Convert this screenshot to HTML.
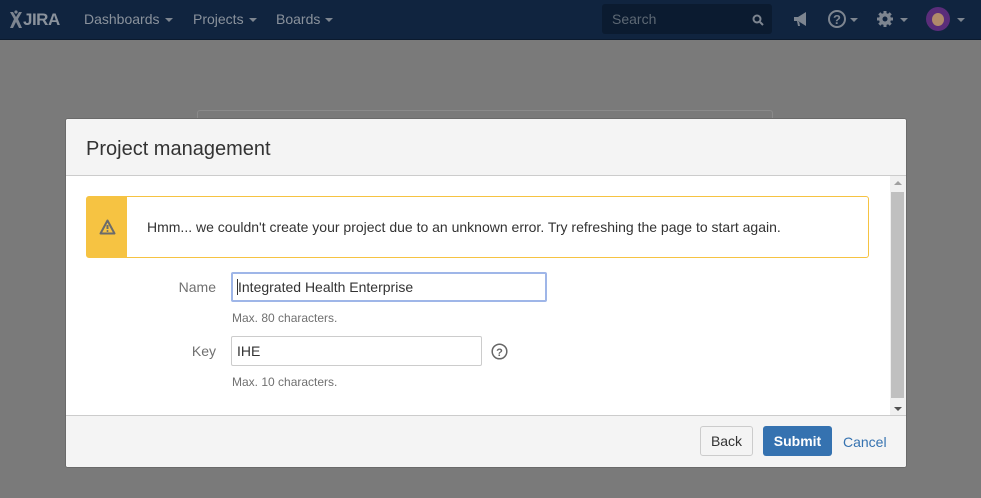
<!DOCTYPE html>
<html><head><style>
*{box-sizing:border-box;margin:0;padding:0}
body{width:981px;height:498px;background:#7a7a7a;font-family:"Liberation Sans",Arial,sans-serif;position:relative;overflow:hidden}
.nav{position:absolute;left:0;top:0;width:981px;height:40px;background:#10243f;border-bottom:1px solid #0b1a2e}
.nav .t{position:absolute;top:11px;color:#8a929c;font-size:14px}
.car{display:inline-block;border-left:4px solid transparent;border-right:4px solid transparent;border-top:4px solid #7d8590;vertical-align:middle;margin-left:5px}
.bg{position:absolute;left:197px;top:110px;width:576px;height:30px;border:1px solid #8a8a8a;border-radius:3px}
.dlg{position:absolute;left:65px;top:118px;width:842px;height:350px;background:#fff;border-radius:3px;overflow:hidden;border:1px solid #6a6a6a}
.hd{height:57px;background:#f4f4f4;border-bottom:1px solid #ccc;padding:19px 20px 0;font-size:20px;color:#333}
.ft{position:absolute;left:0;bottom:0;width:100%;height:52px;background:#f4f4f4;border-top:1px solid #ccc}
.msg{position:absolute;left:20px;top:77px;width:783px;height:62px;border:1px solid #f6c342;border-radius:3px}
.msg .ic{position:absolute;left:0;top:0;width:40px;height:60px;background:#f6c342}
.msg .tx{position:absolute;left:60px;top:22px;font-size:14px;color:#333}
.lbl{position:absolute;font-size:14px;color:#707070;text-align:right;width:60px}
.in{position:absolute;height:30px;border:1px solid #ccc;border-radius:2px;font-size:14px;color:#333;padding:6px 5px}
.desc{position:absolute;font-size:12px;color:#707070}
.sb{position:absolute;left:824px;top:57px;width:16px;height:240px;background:#f0f0f0}
.sb .th{position:absolute;left:1px;top:16px;width:13px;height:206px;background:#c0c0c0}
</style></head><body>
<div class="nav">
<svg style="position:absolute;left:8px;top:10px" width="56" height="20" viewBox="0 0 56 20"><path d="M2 2h3l3 5 3-5h3l-4 7 4 9h-3l-3-6-3 6H2l4-9z" fill="#7d8590"/><circle cx="8" cy="2" r="1.6" fill="#7d8590"/></svg>
<span class="t" style="left:23px;font-weight:bold;font-size:17px;top:10px;letter-spacing:-0.5px">JIRA</span>
<span class="t" style="left:84px">Dashboards<span class="car"></span></span>
<span class="t" style="left:193px">Projects<span class="car"></span></span>
<span class="t" style="left:276px">Boards<span class="car"></span></span>
<div style="position:absolute;left:602px;top:4px;width:170px;height:30px;background:#0b1b30;border-radius:3px"><span style="position:absolute;left:10px;top:7px;color:#5d6874;font-size:14px">Search</span><svg style="position:absolute;right:8px;top:10px" width="12" height="12"><circle cx="5" cy="5" r="3.5" stroke="#7d8590" stroke-width="2" fill="none"/><path d="M8 8l3 3" stroke="#7d8590" stroke-width="2"/></svg></div>
<svg style="position:absolute;left:792px;top:11px" width="18" height="16"><path d="M2 6h4l8-5v14l-8-5H2z M5 10l1 5h2l-1-5" fill="#7d8590"/></svg>
<svg style="position:absolute;left:827px;top:9px" width="20" height="20"><circle cx="10" cy="10" r="8" stroke="#7d8590" stroke-width="2" fill="none"/><text x="10" y="15" font-size="13" font-weight="bold" fill="#7d8590" text-anchor="middle" font-family="Liberation Sans">?</text></svg><span class="car" style="position:absolute;left:845px;top:18px"></span>
<svg style="position:absolute;left:876px;top:10px" width="18" height="18" viewBox="0 0 18 18"><circle cx="9" cy="9" r="6" fill="#7d8590"/><g stroke="#7d8590" stroke-width="3"><path d="M9 1v16M1 9h16M3.3 3.3l11.4 11.4M14.7 3.3L3.3 14.7"/></g><circle cx="9" cy="9" r="2.5" fill="#10243f"/></svg><span class="car" style="position:absolute;left:895px;top:18px"></span>
<div style="position:absolute;left:926px;top:7px;width:24px;height:24px;border-radius:50%;background:#5a2d7a"><div style="position:absolute;left:6px;top:6px;width:12px;height:13px;border-radius:50%;background:#b08a6a"></div></div><span class="car" style="position:absolute;left:952px;top:18px"></span>
</div>
<div class="bg"></div>
<div class="dlg">
<div class="hd">Project management</div>
<div class="msg"><div class="ic"><svg style="position:absolute;left:12px;top:22px" width="17" height="16" viewBox="0 0 17 16"><path d="M8.5 1.5L15.5 14.5H1.5Z" stroke="#6b6b6b" stroke-width="2" fill="none" stroke-linejoin="round"/><path d="M8.5 6v4" stroke="#6b6b6b" stroke-width="2"/><circle cx="8.5" cy="12" r="1" fill="#6b6b6b"/></svg></div><div class="tx">Hmm... we couldn't create your project due to an unknown error. Try refreshing the page to start again.</div></div>
<div class="lbl" style="left:90px;top:160px">Name</div>
<div class="in" style="left:165px;top:153px;width:316px;border:2px solid #9fb6e8;padding:5px 4px"><span style="border-left:1px solid #333">Integrated Health Enterprise</span></div>
<div class="desc" style="left:166px;top:192px">Max. 80 characters.</div>
<div class="lbl" style="left:90px;top:224px">Key</div>
<div class="in" style="left:165px;top:217px;width:251px">IHE</div>
<svg style="position:absolute;left:425px;top:224px" width="17" height="17"><circle cx="8.5" cy="8.5" r="7.3" stroke="#666" stroke-width="1.5" fill="none"/><text x="8.5" y="13" font-size="11" font-weight="bold" fill="#666" text-anchor="middle" font-family="Liberation Sans">?</text></svg>
<div class="desc" style="left:166px;top:256px">Max. 10 characters.</div>
<div class="sb"><div class="th"></div><span style="position:absolute;left:4px;top:5px;border-left:4px solid transparent;border-right:4px solid transparent;border-bottom:4px solid #a0a0a0"></span><span style="position:absolute;left:4px;bottom:5px;border-left:4px solid transparent;border-right:4px solid transparent;border-top:4px solid #505050"></span></div>
<div class="ft">
<div style="position:absolute;left:634px;top:10px;width:53px;height:30px;border:1px solid #ccc;border-radius:3px;background:#f4f4f4;font-size:14px;color:#333;text-align:center;line-height:29px">Back</div>
<div style="position:absolute;left:697px;top:10px;width:69px;height:30px;border-radius:3px;background:#3572b0;font-size:14px;color:#fff;font-weight:bold;text-align:center;line-height:31px">Submit</div>
<div style="position:absolute;left:777px;top:18px;font-size:14px;color:#3572b0">Cancel</div>
</div>
</div>
</body></html>
